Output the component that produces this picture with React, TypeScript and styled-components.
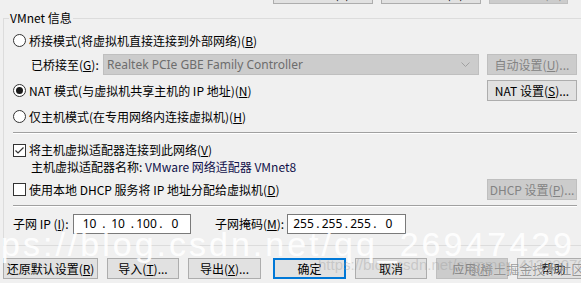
import styled, { createGlobalStyle } from "styled-components";

const GlobalStyle = createGlobalStyle`
  html, body {
    margin: 0;
    padding: 0;
    background: #f0f0f0;
  }
  body {
    font-family: "Noto Sans CJK SC", "Noto Sans", sans-serif;
    font-size: 12px;
    color: #000;
  }
`;

const Dialog = styled.div`
  position: relative;
  width: 581px;
  height: 283px;
  overflow: hidden;
  background: #f0f0f0;
`;

const TopBar = styled.div`
  display: flex;
  gap: 8px;
  height: 4px;
  padding-left: 273px;
`;

const Button = styled.button<{ $w: number; $default?: boolean }>`
  box-sizing: border-box;
  flex: none;
  width: ${(p) => p.$w}px;
  height: 21px;
  padding: 0;
  display: flex;
  align-items: center;
  justify-content: center;
  font-family: inherit;
  font-size: 12px;
  line-height: 16px;
  color: #000;
  background: #e1e1e1;
  border: 1px solid ${(p) => (p.$default ? "#0078d7" : "#adadad")};
  box-shadow: ${(p) => (p.$default ? "inset 0 0 0 1px #0078d7" : "none")};
  white-space: nowrap;

  &:disabled {
    color: #838383;
    background: #cccccc;
    border-color: #bfbfbf;
  }
`;

const TopButton = styled(Button)`
  margin-top: -17px;
`;

const Group = styled.div`
  box-sizing: border-box;
  margin: 14px 0 0 3px;
  width: 600px;
  height: 228px;
  border: 1px solid #dcdcdc;
`;

const Legend = styled.div`
  width: fit-content;
  height: 14px;
  margin: -8px 0 0 5px;
  padding: 0 1px;
  line-height: 14px;
  background: #f0f0f0;
`;

const Body = styled.div`
  width: 564px;
  padding-left: 9px;
`;

const Row = styled.div<{ $mt: number; $h?: number; $indent?: number }>`
  display: flex;
  align-items: center;
  height: ${(p) => p.$h ?? 21}px;
  margin-top: ${(p) => p.$mt}px;
  padding-left: ${(p) => p.$indent ?? 0}px;
  line-height: 16px;
  white-space: nowrap;
`;

const Separator = styled.div<{ $mt: number }>`
  margin-top: ${(p) => p.$mt}px;
  height: 0;
  border-top: 1px solid #a0a0a0;
  border-bottom: 1px solid #ffffff;
`;

const Radio = styled.span<{ $on?: boolean }>`
  box-sizing: border-box;
  flex: none;
  width: 13px;
  height: 13px;
  margin-right: 3px;
  border: 1px solid #333;
  border-radius: 50%;
  background: #fff;
  display: flex;
  align-items: center;
  justify-content: center;

  &::after {
    content: "";
    display: ${(p) => (p.$on ? "block" : "none")};
    width: 7px;
    height: 7px;
    border-radius: 50%;
    background: #1a1a1a;
  }
`;

const Check = styled.span`
  box-sizing: border-box;
  flex: none;
  width: 13px;
  height: 13px;
  margin-right: 3px;
  border: 1px solid #333;
  background: #fff;
  display: flex;
`;

const Key = styled.span`
  text-decoration: underline;
  text-underline-offset: 1px;
`;

const Label = styled.span<{ $w?: number }>`
  flex: none;
  width: ${(p) => (p.$w ? `${p.$w}px` : "auto")};
`;

const Select = styled.div`
  box-sizing: border-box;
  flex: none;
  width: 376px;
  height: 21px;
  padding: 0 8px 0 3px;
  display: flex;
  align-items: center;
  justify-content: space-between;
  background: #cccccc;
  border: 1px solid #bfbfbf;
  color: #6d6d6d;
  font-family: "Noto Sans", sans-serif;
  font-size: 12px;
`;

const PushRight = styled.div`
  margin-left: auto;
`;

const IpBox = styled.div<{ $w: number }>`
  box-sizing: border-box;
  flex: none;
  width: ${(p) => p.$w}px;
  height: 20px;
  padding-left: 5px;
  display: flex;
  align-items: center;
  background: #fff;
  border: 1px solid #7a7a7a;
  font-family: "Noto Sans", sans-serif;
  font-size: 12px;
`;

const Octet = styled.span`
  width: 21px;
  text-align: center;
`;

const Dot = styled.span`
  width: 7.5px;
  text-align: center;
`;

const Adapter = styled.span`
  color: #10104a;
`;

const Footer = styled.div`
  display: flex;
  gap: 9px;
  margin-top: 12px;
  padding-left: 3px;
`;

const OkButton = styled(Button)`
  margin-left: 3px;
`;

const BigMark = styled.div`
  position: absolute;
  right: 6px;
  top: 227px;
  font-family: "Liberation Sans", Arial, sans-serif;
  font-size: 34px;
  line-height: 34px;
  letter-spacing: 3px;
  color: rgba(255, 255, 255, 0.93);
  white-space: nowrap;
  pointer-events: none;
`;

const FaintMark = styled.div`
  position: absolute;
  left: 318px;
  top: 257px;
  font-family: "Liberation Sans", Arial, sans-serif;
  font-size: 15px;
  line-height: 16px;
  color: rgba(150, 150, 150, 0.35);
  white-space: nowrap;
  pointer-events: none;
`;

const SiteMark = styled.div`
  position: absolute;
  left: 468px;
  top: 261px;
  font-family: "Noto Sans CJK SC", sans-serif;
  font-size: 13px;
  line-height: 16px;
  color: rgba(120, 120, 120, 0.75);
  text-shadow: 0 0 1px rgba(255, 255, 255, 0.8);
  white-space: nowrap;
  pointer-events: none;
`;

function IpField({ w, parts }: { w: number; parts: string[] }) {
  return (
    <IpBox $w={w}>
      {parts.map((p, i) => (
        <span key={i} style={{ display: "contents" }}>
          {i > 0 && <Dot>.</Dot>}
          <Octet>{p}</Octet>
        </span>
      ))}
    </IpBox>
  );
}

export default function App() {
  return (
    <>
      <GlobalStyle />
      <Dialog>
        <TopBar>
          <TopButton $w={100}>添加网络(E)...</TopButton>
          <TopButton $w={100}>移除网络(O)</TopButton>
          <TopButton $w={79} disabled>
            重命名网络(W)...
          </TopButton>
        </TopBar>

        <Group>
          <Legend>VMnet 信息</Legend>
          <Body>
            <Row $mt={5}>
              <Radio />
              <Label>
                桥接模式(将虚拟机直接连接到外部网络)(<Key>B</Key>)
              </Label>
            </Row>
            <Row $mt={3} $indent={18}>
              <Label $w={72}>
                已桥接至(<Key>G</Key>):
              </Label>
              <Select>
                <span>Realtek PCIe GBE Family Controller</span>
                <svg width="9" height="5" viewBox="0 0 9 5">
                  <polyline points="0.5,0.5 4.5,4.5 8.5,0.5" fill="none" stroke="#a0a0a0" strokeWidth="1" />
                </svg>
              </Select>
              <PushRight>
                <Button $w={90} disabled>
                  自动设置(<Key>U</Key>)...
                </Button>
              </PushRight>
            </Row>
            <Row $mt={5}>
              <Radio $on />
              <Label>
                NAT 模式(与虚拟机共享主机的 IP 地址)(<Key>N</Key>)
              </Label>
              <PushRight>
                <Button $w={90}>
                  NAT 设置(<Key>S</Key>)...
                </Button>
              </PushRight>
            </Row>
            <Row $mt={5}>
              <Radio />
              <Label>
                仅主机模式(在专用网络内连接虚拟机)(<Key>H</Key>)
              </Label>
            </Row>
            <Separator $mt={5} />
            <Row $mt={7} $h={18}>
              <Check>
                <svg width="11" height="11" viewBox="0 0 11 11">
                  <polyline points="1.5,5.5 4,8 9.5,2.5" fill="none" stroke="#333" strokeWidth="1.2" />
                </svg>
              </Check>
              <Label>
                将主机虚拟适配器连接到此网络(<Key>V</Key>)
              </Label>
            </Row>
            <Row $mt={0} $h={16} $indent={18}>
              <Label>
                主机虚拟适配器名称: <Adapter>VMware 网络适配器 VMnet8</Adapter>
              </Label>
            </Row>
            <Row $mt={4}>
              <Check />
              <Label>
                使用本地 DHCP 服务将 IP 地址分配给虚拟机(<Key>D</Key>)
              </Label>
              <PushRight>
                <Button $w={90} disabled>
                  DHCP 设置(<Key>P</Key>)...
                </Button>
              </PushRight>
            </Row>
            <Separator $mt={5} />
            <Row $mt={7} $h={20}>
              <Label $w={60}>
                子网 IP (<Key>I</Key>):
              </Label>
              <IpField w={118} parts={["10", "10", "100", "0"]} />
              <Label $w={72} style={{ marginLeft: 24 }}>
                子网掩码(<Key>M</Key>):
              </Label>
              <IpField w={119} parts={["255", "255", "255", "0"]} />
            </Row>
          </Body>
        </Group>

        <Footer>
          <Button $w={95}>
            还原默认设置(<Key>R</Key>)
          </Button>
          <Button $w={72}>
            导入(<Key>T</Key>)...
          </Button>
          <Button $w={73}>
            导出(<Key>X</Key>)...
          </Button>
          <OkButton $w={73} $default>
            确定
          </OkButton>
          <Button $w={72}>取消</Button>
          <Button $w={72} disabled>
            应用(<Key>A</Key>)
          </Button>
          <Button $w={73}>帮助</Button>
        </Footer>

        <FaintMark>https://blog.csdn.net/summer_41202070</FaintMark>
        <SiteMark>@稀土掘金技术社区</SiteMark>
        <BigMark>https://blog.csdn.net/qq_26947429</BigMark>
      </Dialog>
    </>
  );
}
